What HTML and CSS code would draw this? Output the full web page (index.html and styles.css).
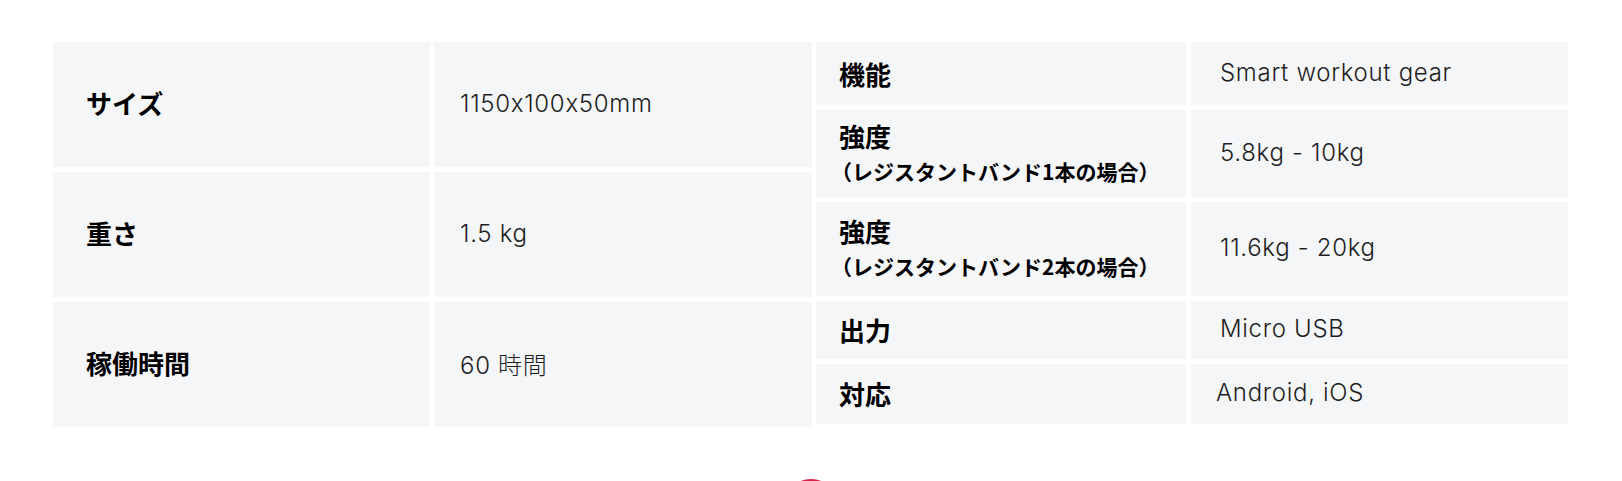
FILE: index.html
```html
<!DOCTYPE html>
<html lang="ja">
<head>
<meta charset="utf-8">
<title>Specs</title>
<link rel="stylesheet" href="styles.css">
</head>
<body>
<section class="specs">
  <div class="spec-table spec-left">
    <div class="cell label">サイズ</div>
    <div class="cell value">1150x100x50mm</div>
    <div class="cell label">重さ</div>
    <div class="cell value">1.5 kg</div>
    <div class="cell label">稼働時間</div>
    <div class="cell value">60 時間</div>
  </div>
  <div class="spec-table spec-right">
    <div class="cell label">機能</div>
    <div class="cell value">Smart workout gear</div>
    <div class="cell label"><div>強度<span class="sub">（レジスタントバンド1本の場合）</span></div></div>
    <div class="cell value">5.8kg - 10kg</div>
    <div class="cell label"><div>強度<span class="sub">（レジスタントバンド2本の場合）</span></div></div>
    <div class="cell value">11.6kg - 20kg</div>
    <div class="cell label">出力</div>
    <div class="cell value">Micro USB</div>
    <div class="cell label">対応</div>
    <div class="cell value value-tight">Android, iOS</div>
  </div>
</section>
<div class="more"><span class="more-dot"></span></div>
</body>
</html>
```
FILE: styles.css
```css
html, body {
  margin: 0;
  padding: 0;
  background: #ffffff;
  overflow: hidden;
}
body {
  width: 1622px;
  height: 481px;
  font-family: "Noto Sans CJK JP", "Noto Sans", sans-serif;
}
.specs {
  display: flex;
  gap: 4px;
  padding: 42px 0 0 53px;
}
.spec-table {
  display: grid;
}
.spec-left {
  width: 759px;
  grid-template-columns: 377px 378px;
  column-gap: 4px;
  row-gap: 5px;
  grid-auto-rows: 125px;
}
.spec-right {
  width: 752px;
  grid-template-columns: 370px 377px;
  column-gap: 5px;
  row-gap: 5px;
  grid-template-rows: 63px 87px 94px 58px 60px;
}
.cell {
  background: #f5f6f8;
  display: flex;
  align-items: center;
  box-sizing: border-box;
}
.label {
  font-family: "Noto Sans CJK JP", sans-serif;
  font-weight: 700;
  font-size: 26px;
  color: #000000;
  line-height: 34px;
}
.spec-left .label { padding-left: 33px; padding-bottom: 4px; }
.spec-right .label { padding-left: 23px; }
.sub {
  display: block;
  font-size: 21px;
  line-height: 36px;
  margin-left: -8px;
}
.value {
  font-family: "Inter", "Noto Sans CJK JP", sans-serif;
  font-feature-settings: "calt" 0;
  font-weight: 300;
  font-size: 24px;
  letter-spacing: 0.7px;
  color: #1e1e1e;
  padding-bottom: 3px;
}
.spec-left .value { padding-left: 26px; }
.spec-right .value { padding-left: 29px; }
.spec-right .value-tight { padding-left: 25px; }
.more {
  display: flex;
  justify-content: center;
  padding-top: 52px;
  height: 2px;
  overflow: hidden;
}
.more-dot {
  width: 56px;
  height: 56px;
  border-radius: 50%;
  background: #d8224c;
  flex: none;
}
```
